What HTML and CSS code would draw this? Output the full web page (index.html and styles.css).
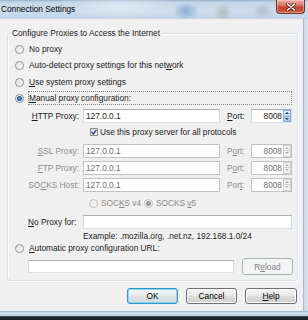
FILE: index.html
```html
<!DOCTYPE html>
<html>
<head>
<meta charset="utf-8">
<title>Connection Settings</title>
<link rel="stylesheet" href="styles.css">
</head>
<body>
<div class="win">
  <div class="titlebar">
    <span class="title">Connection Settings</span>
    <div class="close">
      <svg width="10" height="8" viewBox="0 0 10 8"><path d="M1.5 1 L8.5 7 M8.5 1 L1.5 7" stroke="#5a2a24" stroke-width="3" stroke-linecap="round"/><path d="M1.5 1 L8.5 7 M8.5 1 L1.5 7" stroke="#ffffff" stroke-width="1.6" stroke-linecap="round"/></svg>
    </div>
  </div>
  <div class="frame">
    <div class="dialog">
      <div class="group">
        <div class="legend">Configure Proxies to Access the Internet</div>
        <div class="row rrow r1"><span class="radio"></span><span class="rl">No proxy</span></div>
        <div class="row rrow"><span class="radio"></span><span class="rl">Auto-detect proxy settings for this net<u>w</u>ork</span></div>
        <div class="row rrow r3"><span class="radio"></span><span class="rl"><u>U</u>se system proxy settings</span></div>
        <div class="row rrow"><span class="radio on"></span><span class="focus"><u>M</u>anual proxy configuration:</span></div>

        <div class="row prow http">
          <span class="plabel"><u>H</u>TTP Proxy:</span>
          <span class="field">127.0.0.1</span>
          <span class="port"><u>P</u>ort:</span>
          <span class="pbox"><span class="pval">8008</span><span class="spin"><span class="up"></span><span class="dn"></span></span></span>
        </div>
        <div class="row crow"><span class="check"><svg width="6" height="6" viewBox="0 0 6 6"><path d="M0.6 3 L2.4 5 L5.5 0.8" fill="none" stroke="#30468a" stroke-width="1.4"/></svg></span><span class="cl">Use this proxy server for all protocols</span></div>

        <div class="row prow dis s1">
          <span class="plabel"><u>S</u>SL Proxy:</span>
          <span class="field">127.0.0.1</span>
          <span class="port">P<u>o</u>rt:</span>
          <span class="pbox"><span class="pval">8008</span><span class="spin"><span class="up"></span><span class="dn"></span></span></span>
        </div>
        <div class="row prow dis">
          <span class="plabel"><u>F</u>TP Proxy:</span>
          <span class="field">127.0.0.1</span>
          <span class="port">P<u>o</u>rt:</span>
          <span class="pbox"><span class="pval">8008</span><span class="spin"><span class="up"></span><span class="dn"></span></span></span>
        </div>
        <div class="row prow dis">
          <span class="plabel">SO<u>C</u>KS Host:</span>
          <span class="field">127.0.0.1</span>
          <span class="port">Por<u>t</u>:</span>
          <span class="pbox"><span class="pval">8008</span><span class="spin"><span class="up"></span><span class="dn"></span></span></span>
        </div>

        <div class="row vrow">
          <span class="opt v4"><span class="radio dis"></span><span class="vl">SOC<u>K</u>S v4</span></span>
          <span class="opt"><span class="radio dis on"></span><span class="vl">SOCKS <u>v</u>5</span></span>
        </div>

        <div class="row nrow">
          <span class="plabel left"><u>N</u>o Proxy for:</span>
          <span class="field wide"></span>
        </div>
        <div class="row erow">Example: .mozilla.org, .net.nz, 192.168.1.0/24</div>

        <div class="row arow"><span class="radio"></span><span class="rl"><u>A</u>utomatic proxy configuration URL:</span></div>
        <div class="row urow">
          <span class="field url"></span>
          <span class="btn disabled reload">R<u>e</u>load</span>
        </div>
      </div>
      <div class="buttons">
        <span class="btn default">OK</span>
        <span class="btn">Cancel</span>
        <span class="btn help"><u>H</u>elp</span>
      </div>
    </div>
    <div class="side"></div>
  </div>
  <div class="glass"></div>
  <div class="desk"></div>
</div>
</body>
</html>
```

FILE: styles.css
```css
* { box-sizing: border-box; }
html, body { margin: 0; padding: 0; }
body {
  width: 308px;
  height: 320px;
  overflow: hidden;
  font-family: "Liberation Sans", Arial, sans-serif;
  font-size: 8.3px;
  color: #1b1b1b;
  background: #1e2226;
}
u { text-decoration-thickness: 1px; text-underline-offset: 1px; }

.win { width: 308px; height: 320px; display: flex; flex-direction: column; }

.titlebar {
  height: 19px;
  flex: none;
  display: flex;
  justify-content: space-between;
  align-items: flex-start;
  background:
    radial-gradient(ellipse 13px 9px at 186px 11px, rgba(86,136,188,.55), rgba(86,136,188,0)),
    radial-gradient(ellipse 9px 9px at 223px 12px, rgba(140,150,118,.45), rgba(140,150,118,0)),
    radial-gradient(ellipse 10px 8px at 262px 11px, rgba(140,152,165,.45), rgba(140,152,165,0)),
    radial-gradient(ellipse 60px 14px at 120px 6px, rgba(235,242,250,.6), rgba(235,242,250,0)),
    linear-gradient(#97afc6 0, #c3d6e9 2px, #cddded 55%, #bfd3e7 100%);
}
.title { padding-left: 1px; line-height: 19px; color: #000; }
.close {
  width: 29px;
  height: 14px;
  margin-right: 3px;
  border: 1px solid #7a3128;
  border-top: 0;
  border-radius: 0 0 4px 4px;
  background: linear-gradient(#eab0a2 0, #d9786a 40%, #c4412f 55%, #d05a44 100%);
  box-shadow: inset 0 0 0 1px rgba(255,220,210,.45);
  display: flex;
  align-items: center;
  justify-content: center;
}

.frame { display: flex; height: 292px; flex: none; }
.dialog {
  width: 303px;
  flex: none;
  background: #f0f0f0;
  display: flex;
  flex-direction: column;
  padding-top: 14px;
}
.side { flex: 1; border-left: 1px solid #a9b9c9; background: linear-gradient(90deg, #c9d7e5, #dfe7ef); }
.glass { height: 5px; flex: none; background: linear-gradient(#93aecb 0, #cfe0f1 35%, #b8cde3 100%); }
.desk { height: 4px; flex: none; background: #202428; border-top: 1px solid #4a4f55; }

.group {
  margin: 0 5px 0 7px;
  height: 248px;
  border: 1px solid #d5dfe5;
  border-radius: 3px;
  box-shadow: inset 1px 1px 0 #fff, 1px 1px 0 #fff;
  padding: 0 5px 4px 7px;
  display: flex;
  flex-direction: column;
}
.legend {
  align-self: flex-start;
  margin: -6px 0 0 -5px;
  padding: 0 2px;
  height: 11px;
  line-height: 11px;
  background: #f0f0f0;
}

.row { display: flex; align-items: center; flex: none; }
.rrow { height: 16px; }
.r1 { margin-top: 2px; }
.r3 { margin-top: 1px; }
.rl { margin-left: 5px; white-space: nowrap; }

.radio {
  width: 9px;
  height: 9px;
  flex: none;
  border-radius: 50%;
  border: 1px solid #8d8f90;
  background: linear-gradient(135deg, #cfd0d1 0%, #eeeeee 55%, #ffffff 100%);
  box-shadow: inset 0 0 0 1px #f4f4f4;
}
.radio.on {
  background: radial-gradient(circle, #8cbcec 0, #2d6bb8 1.4px, #164e8f 2.4px, #aac3dc 3px, #ececec 3.6px);
}
.radio.dis { border-color: #bdbdbd; background: linear-gradient(135deg, #e6e6e6, #f8f8f8); }
.radio.dis.on { background: radial-gradient(circle, #a6a6a6 0, #929292 2.2px, #e8e8e8 2.9px, #f6f6f6 3.6px); }

.focus {
  margin-left: 4px;
  flex: 1;
  height: 14px;
  border: 1px dotted #8a8a8a;
  display: flex;
  align-items: center;
  white-space: nowrap;
}

.prow { height: 17px; margin-left: 13px; }
.prow.http { height: 16px; margin-top: 2px; }
.prow.s1 { margin-top: 3px; }
.plabel { width: 51px; text-align: right; white-space: nowrap; flex: none; }
.plabel.left { text-align: left; }
.field {
  margin-left: 4px;
  width: 137px;
  height: 14px;
  flex: none;
  background: #fff;
  border: 1px solid #abadb3;
  border-color: #abadb3 #d4d7dd #dfe3e9 #d4d7dd;
  padding-left: 2px;
  display: flex;
  align-items: center;
  color: #1b1b1b;
}
.port { margin-left: 7px; width: 24px; flex: none; }
.pbox {
  width: 41px;
  height: 14px;
  flex: none;
  display: flex;
  background: #fff;
  border: 1px solid #abadb3;
  border-color: #abadb3 #d4d7dd #dfe3e9 #d4d7dd;
}
.pval { flex: 1; text-align: right; padding-right: 1px; line-height: 12px; }
.spin { width: 8px; flex: none; display: flex; flex-direction: column; gap: 0; }
.spin span {
  flex: 1;
  display: flex;
  align-items: center;
  justify-content: center;
  border: 1px solid #8fa9c8;
  background: linear-gradient(#eaf2fb, #c6daf0);
}
.spin .dn { border-top: 0; background: linear-gradient(#c9dcf1, #a9c7e8); }
.spin span::before {
  content: "";
  border-left: 2px solid transparent;
  border-right: 2px solid transparent;
}
.spin .up::before { border-bottom: 2px solid #1c3566; }
.spin .dn::before { border-top: 2px solid #1c3566; }

.dis .plabel, .dis .port { color: #8b8b8b; }
.dis .field, .dis .pbox { border-color: #c2c2c2; color: #6f6f6f; }
.dis .spin span { border-color: #cfcfcf; background: #f4f4f4; }
.dis .spin .dn { border-top: 0; }
.dis .spin .up::before { border-bottom-color: #b0b0b0; }
.dis .spin .dn::before { border-top-color: #b0b0b0; }

.crow { height: 14px; margin-top: 1px; margin-left: 75px; }
.check {
  width: 8px;
  height: 8px;
  flex: none;
  border: 1px solid #8e8f8f;
  background: linear-gradient(135deg, #dadada, #ffffff);
  display: flex;
  align-items: center;
  justify-content: center;
}
.cl { margin-left: 2px; white-space: nowrap; }

.vrow { height: 16px; margin-top: 2px; margin-left: 74px; color: #8b8b8b; }
.opt { display: flex; align-items: center; }
.opt.v4 { width: 55px; }
.vl { margin-left: 3px; white-space: nowrap; }

.nrow { height: 16px; margin-top: 3px; margin-left: 13px; }
.field.wide { width: 209px; }
.erow { height: 11px; margin-left: 68px; white-space: nowrap; }
.arow { height: 14px; }
.urow { height: 19px; margin-top: 2px; margin-left: 13px; }
.field.url { margin-left: 0; width: 206px; height: 13px; }

.btn {
  flex: none;
  height: 16px;
  width: 51px;
  display: flex;
  align-items: center;
  justify-content: center;
  border: 1px solid #707070;
  border-radius: 3px;
  background: linear-gradient(#f3f3f3 0, #ebebeb 45%, #dddddd 50%, #cfcfcf 100%);
  box-shadow: inset 0 0 0 1px #fbfbfb;
  color: #000;
}
.btn.default {
  border-color: #3c8fc4;
  box-shadow: inset 0 0 0 1px #7fdcf8;
  background: linear-gradient(#f3f6f8 0, #eaeef1 45%, #dde3e7 50%, #d2dadf 100%);
}
.btn.help { width: 52px; }
.btn.disabled {
  border-color: #adb2b5;
  background: #f4f4f4;
  box-shadow: none;
  color: #838383;
}
.reload { margin-left: 8px; height: 17px; }

.buttons {
  display: flex;
  justify-content: flex-end;
  gap: 8px;
  margin-top: 7px;
  margin-right: 6px;
  height: 16px;
}
```
